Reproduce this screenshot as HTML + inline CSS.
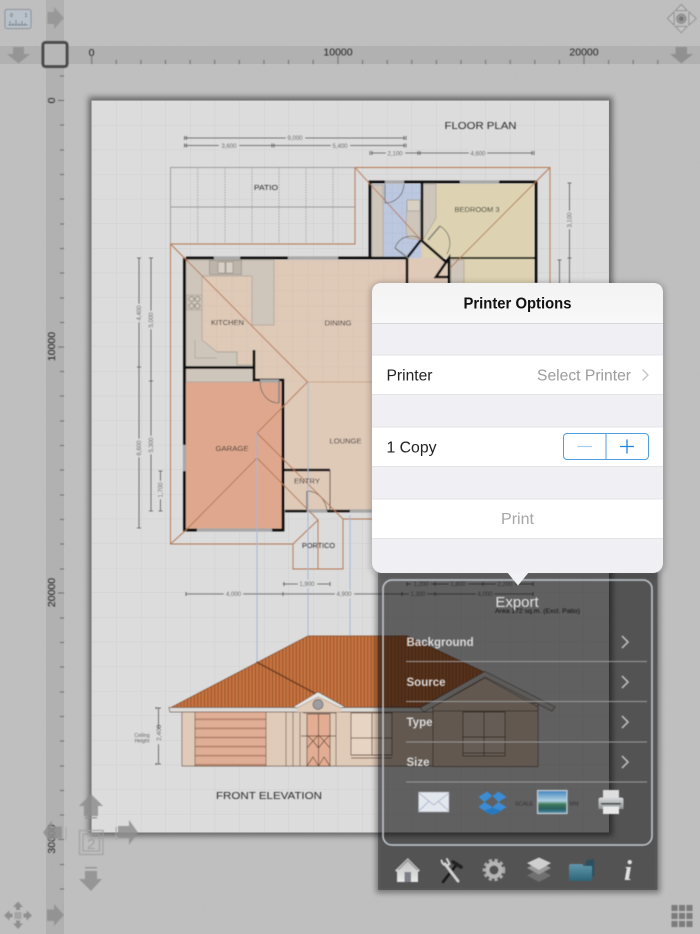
<!DOCTYPE html>
<html><head><meta charset="utf-8"><style>
html,body{margin:0;padding:0;background:#bbb;width:700px;height:934px;overflow:hidden}
svg{display:block}
text{font-family:"Liberation Sans",sans-serif}
</style></head><body>
<svg xmlns="http://www.w3.org/2000/svg" width="700" height="934" viewBox="0 0 700 934">
<defs>
<pattern id="grid" patternUnits="userSpaceOnUse" x="91.7" y="100.5" width="24.6" height="24.6"><rect width="24.6" height="24.6" fill="#dcdcdc"/><path d="M0 0H24.6M0 0V24.6" stroke="#d1d1d1" stroke-width="1" fill="none"/></pattern>
<pattern id="tile" patternUnits="userSpaceOnUse" x="186" y="260" width="15.2" height="15.2"><rect width="15.2" height="15.2" fill="#dfc9b7"/><path d="M0 0H15.2M0 0V15.2" stroke="#d3bfae" stroke-width=".8" fill="none"/></pattern>
<pattern id="btile" patternUnits="userSpaceOnUse" x="372" y="183" width="10" height="10"><rect width="10" height="10" fill="#bcc8df"/><path d="M0 0H10M0 0V10" stroke="#a9b5cc" stroke-width=".6" fill="none"/></pattern>
<pattern id="rf" patternUnits="userSpaceOnUse" width="3.4" height="8"><rect width="3.4" height="8" fill="#c8743f"/><rect width="1" height="8" fill="#95512c"/></pattern>
<pattern id="gd" patternUnits="userSpaceOnUse" x="195" y="712" width="71" height="9.1"><rect width="71" height="9.1" fill="#dfae95"/><rect y="6.5" width="71" height="1.6" fill="#b5806a"/></pattern>
<filter id="noise" x="0" y="0" width="100%" height="100%"><feTurbulence type="fractalNoise" baseFrequency=".035 .06" numOctaves="3" seed="5"/><feColorMatrix values="0 0 0 0 .5 0 0 0 0 .5 0 0 0 0 .5 .6 0 0 0 -.2"/></filter>
<filter id="b2" x="-10%" y="-10%" width="120%" height="120%"><feGaussianBlur stdDeviation="2.8"/></filter>
<filter id="s" x="-5%" y="-5%" width="110%" height="110%"><feGaussianBlur stdDeviation=".45"/></filter>
<linearGradient id="head" x1="0" y1="0" x2="0" y2="1"><stop offset="0" stop-color="#f3f3f3"/><stop offset="1" stop-color="#f8f8f9"/></linearGradient>
<linearGradient id="sky" x1="0" y1="0" x2="0" y2="1"><stop offset="0" stop-color="#3f83bd"/><stop offset=".45" stop-color="#b1d2e4"/><stop offset=".6" stop-color="#3d7a5a"/><stop offset=".8" stop-color="#2d5f60"/><stop offset="1" stop-color="#4b94b4"/></linearGradient>
<linearGradient id="home" x1="0" y1="0" x2="0" y2="1"><stop offset="0" stop-color="#bdbdbd"/><stop offset="1" stop-color="#e8e8e8"/></linearGradient>
<linearGradient id="fold" x1="0" y1="0" x2="0" y2="1"><stop offset="0" stop-color="#5f97ac"/><stop offset="1" stop-color="#2f6478"/></linearGradient>
<linearGradient id="pr" x1="0" y1="0" x2="0" y2="1"><stop offset="0" stop-color="#d8dadc"/><stop offset="1" stop-color="#8f9497"/></linearGradient>
</defs>

<!-- background -->
<rect width="700" height="934" fill="#bfbfbf"/>
<rect width="700" height="934" filter="url(#noise)" opacity=".22"/>
<rect x="0" y="46" width="700" height="18" fill="#000" opacity=".07"/>
<rect x="46" y="0" width="18" height="934" fill="#000" opacity=".07"/>
<rect x="46" y="46" width="18" height="18" fill="#bbb" opacity=".5"/>

<g filter="url(#s)">
<!-- rulers -->
<g stroke="#6f6f6f" stroke-width="1" fill="none">
<path d="M91.7 56V64M338 56V64M584 56V64M116.3 60V64M140.9 60V64M165.5 60V64M190.1 60V64M214.7 60V64M239.3 60V64M263.9 60V64M288.5 60V64M313.1 60V64M362.6 60V64M387.2 60V64M411.8 60V64M436.4 60V64M461 60V64M485.6 60V64M510.2 60V64M534.8 60V64M559.4 60V64M608.6 60V64M633.2 60V64M657.8 60V64"/>
<path d="M58 100.5H64M60 76H64M60 125H64M60 150H64M60 174.500H64M60 199H64M60 224H64M60 248.500H64M60 273H64M60 298H64M60 322.500H64M58 347H64M60 371.500H64M60 396H64M60 421H64M60 445.500H64M60 470H64M60 495H64M60 519.500H64M60 544H64M60 569H64M58 593H64M60 618H64M60 642.500H64M60 667H64M60 692H64M60 716.500H64M60 741H64M60 766H64M60 790.500H64M60 815H64M58 839.500H64M60 864.500H64M60 889H64"/>
</g>
<g font-size="10.500" fill="#222">
<text x="91.500" y="56" text-anchor="middle">0</text>
<text x="338" y="55.500" text-anchor="middle">10000</text>
<text x="584" y="55.500" text-anchor="middle">20000</text>
<text transform="translate(55,100.500) rotate(-90)" text-anchor="middle">0</text>
<text transform="translate(55,346.500) rotate(-90)" text-anchor="middle">10000</text>
<text transform="translate(55,592.500) rotate(-90)" text-anchor="middle">20000</text>
<text transform="translate(55,839) rotate(-90)" text-anchor="middle">30000</text>
</g>

<!-- top-left controls -->
<rect x="5" y="9.500" width="26" height="19" rx="2" fill="#b9c2ca" stroke="#8b8f94" stroke-width="1"/>
<path d="M8 25H28M10 25V21M13 25V23M16 25V20M19 25V23M22 25V21M25 25V23" stroke="#66707a" stroke-width=".8" fill="none"/>
<text x="11.500" y="17" font-size="5" fill="#444" text-anchor="middle">0</text><text x="26" y="17" font-size="5" fill="#444" text-anchor="middle">1</text>
<path d="M47.500 12H54V7L64 18L54 29V24H47.500Z" fill="#989898"/>
<path d="M13 47H24V54H30L18.500 63.500L7 54H13Z" fill="#959595"/>
<rect x="43" y="42.500" width="24" height="24" rx="2.500" fill="#bdbdbd" fill-opacity=".6" stroke="#4c4c4c" stroke-width="3"/>
<!-- top-right -->
<g fill="#c4c4c4" stroke="#929292" stroke-width="1">
<path d="M681.300 4.500L687 10.500H675.500Z"/><path d="M681.300 32.700L687 26.500H675.500Z"/>
<path d="M667.500 18.500L674 12V25Z"/><path d="M696.200 18.500L689 12V25Z"/>
</g>
<circle cx="681.300" cy="18.700" r="4.600" fill="#9a9a9a" stroke="#858585" stroke-width="1"/><circle cx="681.300" cy="18.700" r="2.300" fill="#747474"/>
<path d="M675.500 47H687V54H693L681.300 63.500L670 54H675.500Z" fill="#909090"/>
</g>

<!-- paper -->
<rect x="88.500" y="97" width="524" height="739" fill="#333" opacity=".62" filter="url(#b2)"/>
<rect x="91.500" y="100.500" width="517.500" height="732" fill="url(#grid)"/>

<g filter="url(#s)">
<!-- patio -->
<g stroke="#9d9d9d" fill="none"><path d="M355 167.500H170.500V244M170.500 207H355" stroke-width=".9"/>
<path d="M197.700 167.500V244M225 167.500V244M252 167.500V244M279 167.500V244M306 167.500V244M333 167.500V244" stroke-dasharray="1.500 1.200" stroke-width=".8"/></g>

<!-- floors -->
<rect x="186" y="260" width="222" height="122" fill="url(#tile)"/>
<rect x="285" y="382" width="95" height="129" fill="#dfc9b7"/>
<rect x="186" y="382" width="97" height="148" fill="#dfa88e"/>
<path d="M407 258L421 240L447 263V300H407Z" fill="#dfc9b7"/>
<rect x="372" y="184" width="49" height="74" fill="url(#btile)"/>
<rect x="423" y="184" width="111" height="74" fill="#ddd3b2"/>
<rect x="450" y="259" width="84" height="30" fill="#ddd3b2"/>
<!-- counters -->
<g fill="#cfc6bb" stroke="#a9a298" stroke-width=".7">
<path d="M186 260H274V325H252V276H202V340L217 352H237V365H254V381H186V369H186Z"/>
<rect x="186" y="367" width="68" height="15"/>
<path d="M372 185H383V257H372Z"/><path d="M407 200H420V240L407 238L406 226Z"/>
<path d="M423 184H436V218L423 240Z"/><rect x="451" y="260" width="13" height="30"/>
<rect x="187" y="295" width="15" height="15"/>
<path d="M195 340V358H217M217 352H237V365" fill="none"/>
</g>
<g fill="#bdb5aa" stroke="#8d877e" stroke-width=".6"><rect x="209.500" y="260.500" width="32" height="14"/><rect x="218" y="262" width="7" height="11" fill="#d7d0c6"/><rect x="226" y="262" width="7" height="11" fill="#d7d0c6"/></g>
<g fill="none" stroke="#7f7a72" stroke-width=".7"><circle cx="191.500" cy="299" r="2.600"/><circle cx="197.500" cy="299" r="2.600"/><circle cx="191.500" cy="306" r="2.600"/><circle cx="197.500" cy="306" r="2.600"/></g>
<rect x="407" y="200" width="13" height="11" fill="#d7d1c4" stroke="#9b958b" stroke-width=".6"/>

<!-- walls -->
<g stroke="#0c0c0c" fill="none" stroke-width="2.800">
<path d="M184.500 258V530H283V380H254V350M186 258H370V182H536V283M184.500 367.500H254M370 182V258H408"/>
<path d="M422 182V240M407 258V300M407 258L421 240L446 262M283.500 470H330M285 511H350M283 530H186M449 262V290M449 283V258L436 277H449" stroke-width="2.600"/>
<path d="M449 258H535" stroke-width="2"/>
</g>
<path d="M330 470V511" stroke="#333" stroke-width=".9"/>
<!-- windows -->
<g stroke="#a7a7a7" stroke-width="3.200" fill="none"><path d="M214 258H240M288 258H338M184.500 445V471M197 530H272M385 182H404M460 182H499M350 511H372M307 511H327M260 381H279"/></g>
<!-- doors -->
<g fill="none" stroke="#555" stroke-width=".7"><path d="M260 381C260 394 268 403 279 403"/><path d="M279 381V403" stroke-width="1.600" stroke="#888"/>
<path d="M307 491C318 491 326 500 327 511"/><path d="M307 491V511" stroke-width="1.400" stroke="#777"/>
<path d="M385 203C395 203 404 195 404 184"/><path d="M385 184V203" stroke-width="1" stroke="#777"/>
<path d="M395 248C400 234 416 234 421 240" stroke="#555"/><path d="M395 248L408 258" stroke-width="1.400" stroke="#777"/>
<path d="M440 226C451 233 452 245 447 254" stroke="#555"/><path d="M440 226L428 240" stroke-width="1.400" stroke="#777"/></g>

<!-- roof outline -->
<g fill="none" stroke="#b4744e" stroke-width=".9">
<path d="M355 167.500H550V285M355 167.500V244H170.500V544H293V569H343V519H372"/>
<path d="M170.500 244L307.500 382L257 433V458L186 530L170.500 544M257 433L343 519M257 458L318 520L293 544M318 520V569M355 167.500L421 240M550 167.500L450 268"/>
<path d="M307.500 382H372" stroke="#b4744e" stroke-width=".4"/>
</g>
<!-- blue -->
<g stroke="#a4b7d8" stroke-width=".9" fill="none"><path d="M257 433V662M308 382V637M350 515V637"/></g>

<!-- hand labels -->
<g fill="#2c2c2c" font-size="7">
<text x="254" y="190" textLength="24" lengthAdjust="spacingAndGlyphs">PATIO</text>
<text x="454.500" y="212" textLength="45" lengthAdjust="spacingAndGlyphs">BEDROOM 3</text>
<text x="211" y="325" textLength="33" lengthAdjust="spacingAndGlyphs">KITCHEN</text>
<text x="324.500" y="325.500" textLength="27" lengthAdjust="spacingAndGlyphs">DINING</text>
<text x="215.500" y="451" textLength="33" lengthAdjust="spacingAndGlyphs">GARAGE</text>
<text x="329.500" y="443.500" textLength="32" lengthAdjust="spacingAndGlyphs">LOUNGE</text>
<text x="294" y="483.500" textLength="26" lengthAdjust="spacingAndGlyphs">ENTRY</text>
<text x="302" y="548" textLength="33" lengthAdjust="spacingAndGlyphs">PORTICO</text>
<text x="444.500" y="129" font-size="10" textLength="72" lengthAdjust="spacingAndGlyphs">FLOOR PLAN</text>
<text x="216" y="799" font-size="10" textLength="106" lengthAdjust="spacingAndGlyphs">FRONT ELEVATION</text>
</g>

<!-- dimensions -->
<g stroke="#555" stroke-width=".8" fill="none">
<path d="M185 138H405M185 145.500H405M371 153H533"/>
<path d="M184.500 136V140M186.500 136V140M184.500 143.500V147.500M186.500 143.500V147.500M272 143.500V147.500M274 143.500V147.500M404 136V140M406 136V140M404 143.500V147.500M406 143.500V147.500M370 151V155M372 151V155M418 151V155M420 151V155M532 151V155M534 151V155"/>
<path d="M139 258V528M151 258V511M160.500 471V511M569.500 183V290M559.500 260V290"/>
<path d="M137 258H141M137 367H141M137 528H141M149 258H153M149 381H153M149 511H153M158.500 471H162.500M158.500 511H162.500M567.500 183H571.500M567.500 258H571.500M557.500 260H561.500"/>
<path d="M186 594H404M283 584H330M407 584H533M402 594H533"/>
<path d="M186 592V596M283 592V596M284 582V586M330 582V586M407 582V586M435 582V586M483 582V586M533 582V586M402 592V596M435 592V596M533 592V596"/>
</g>
<g fill="#dcdcdc"><rect x="286" y="134" width="19" height="8"/><rect x="219" y="142" width="20" height="8"/><rect x="331" y="142" width="19" height="8"/><rect x="386" y="149" width="19" height="8"/><rect x="469" y="149" width="18" height="8"/>
<rect x="135" y="304" width="8" height="18"/><rect x="135" y="439" width="8" height="18"/><rect x="147" y="311" width="8" height="18"/><rect x="147" y="436" width="8" height="18"/><rect x="156.500" y="481" width="8" height="18"/><rect x="565.500" y="211" width="8" height="18"/>
<rect x="224" y="590" width="19" height="8"/><rect x="335" y="590" width="19" height="8"/><rect x="298" y="580" width="19" height="8"/><rect x="411" y="580" width="20" height="8"/><rect x="449" y="580" width="19" height="8"/><rect x="496" y="580" width="19" height="8"/><rect x="409" y="590" width="18" height="8"/><rect x="476" y="590" width="18" height="8"/></g>
<g font-size="6" fill="#555" text-anchor="middle">
<text x="295" y="140">9,000</text><text x="229" y="148">3,600</text><text x="340" y="148">5,400</text><text x="395" y="155.500">2,100</text><text x="478" y="155.500">4,600</text>
<text transform="translate(141,313) rotate(-90)">4,400</text><text transform="translate(141,448) rotate(-90)">6,600</text>
<text transform="translate(153,320) rotate(-90)">5,000</text><text transform="translate(153,445) rotate(-90)">5,300</text>
<text transform="translate(162.500,490) rotate(-90)">1,700</text><text transform="translate(571.500,220) rotate(-90)">3,100</text>
<text x="233.500" y="596">4,000</text><text x="344" y="596">4,900</text><text x="307" y="586">1,900</text>
<text x="421" y="586">1,200</text><text x="458" y="586">1,800</text><text x="505" y="586">2,200</text><text x="418" y="596">1,300</text><text x="485" y="596">4,000</text>
</g>
<text x="495" y="613" font-size="6.500" fill="#222" textLength="85" lengthAdjust="spacingAndGlyphs">Area 172 sq.m.  (Excl. Patio)</text>

<!-- elevation -->
<g stroke="#6b5a4e" stroke-width=".7">
<path d="M182 712H433V766H182Z" fill="#e0cbb9"/>
<path d="M433 703H538V766.500H433Z" fill="#e0cbb9"/>
<path d="M170 708L308 636H407L485 672.500L420 707Z" fill="url(#rf)" stroke="#7d4a2e"/>
<path d="M256.500 662L318 695" fill="none" stroke="#6a3b20" stroke-width="1.500"/>
<path d="M169 707.500H433V712H170Z" fill="#dedcd8"/>
<path d="M420 708L485 671.500L555 707L552 711L485 677L424 712Z" fill="#d4d1cc"/>
<path d="M433 707L485 678L538 707V711H433Z" fill="#e0cbb9"/>
<rect x="195" y="712" width="71" height="54" fill="url(#gd)"/>
<path d="M293 707L318 692L345 707L341 708L318 697L297 708Z" fill="#e6e5e2"/>
<path d="M297 708L318 697L341 708V712H297Z" fill="#e0cbb9" stroke="none"/>
<circle cx="318" cy="704.500" r="5" fill="#9b9da1"/>
<path d="M300 712V766M336 712V766M286 712V766M293 712V766M303 713H336" fill="none"/>
<rect x="307" y="714" width="23" height="52" fill="#e2ad93" stroke="#5c4033"/>
<path d="M318.500 714V766M307 735L313 741L307 748M330 735L324 741L330 748M318.500 735L313 741L318.500 748L324 741ZM307 766L313 757L318.500 766L324 757L330 766M301 736H336" fill="none" stroke="#5c4033"/>
<rect x="351" y="713" width="41" height="42" fill="#e8d4c3" stroke="#5c4033"/>
<path d="M372 713V755M351 738H392M351 755H392M351 758H392" fill="none" stroke="#5c4033"/>
<rect x="463" y="712" width="42" height="44" fill="#e8d4c3" stroke="#5c4033"/>
<path d="M484 712V756M463 737H505M463 753H505" fill="none" stroke="#5c4033"/>
</g>
<g stroke="#555" stroke-width=".8" fill="none"><path d="M158.500 708V764M156 708H161M156 764H161M156 707V709M156 763V765"/></g>
<rect x="155" y="729" width="7" height="15" fill="#dcdcdc"/>
<text transform="translate(161,741) rotate(-90)" font-size="6.500" fill="#555">2,400</text>
<text x="142" y="737" font-size="5" fill="#666" text-anchor="middle">Ceiling</text><text x="142" y="742.500" font-size="5" fill="#666" text-anchor="middle">Height</text>
</g>

<!-- overlay nav -->
<g filter="url(#s)">
<g fill="#8f8f8f" opacity=".85">
<path d="M84 816V806H79L91 794L103 806H98V816Z"/><path d="M85 817H97V818.500H85ZM85 867H97V868.500H85Z"/>
<path d="M85 871H97V879H102L91 891L79 879H85Z"/>
<path d="M62 826V838H52V844L43 832L52 820V826Z" transform="translate(0,.5)"/>
<path d="M118 826H129V820L138 832.500L129 845V838H118Z"/>
<path d="M47 909.500H54V904L64 915L54 926V921H47Z"/>
</g>
<g fill="none" stroke="#a0a0a0" stroke-width="1.200" opacity=".9"><rect x="79.500" y="830.500" width="23.500" height="24"/><rect x="83" y="834" width="16.500" height="17"/></g>
<text x="91.300" y="849" font-size="15" fill="#a0a0a0" text-anchor="middle">2</text>
<path d="M66 827V840M116 827V840" stroke="#a8a8a8"/>
<!-- move -->
<g fill="#8f8f8f"><path d="M18 901.500L23 907H20V910H16V907H13ZM18 929L13 923.500H16V920.500H20V923.500H23ZM4 915.500L9.500 910.500V913.500H12.500V917.500H9.500V920.500ZM32 915.500L26.500 920.500V917.500H23.500V913.500H26.500V910.500Z"/></g>
<rect x="15" y="912.500" width="6" height="6" fill="#a5a5a5" stroke="#999" stroke-width=".6"/>
<!-- grid btn -->
<g fill="#7c7c7c"><rect x="671.500" y="905" width="6" height="6"/><rect x="679" y="905" width="6" height="6"/><rect x="686.500" y="905" width="6" height="6"/><rect x="671.500" y="913" width="6" height="6"/><rect x="679" y="913" width="6" height="6"/><rect x="686.500" y="913" width="6" height="6"/><rect x="671.500" y="921" width="6" height="6"/><rect x="679" y="921" width="6" height="6"/><rect x="686.500" y="921" width="6" height="6"/></g>
</g>

<!-- dark panel -->
<rect x="376" y="572" width="284" height="321" fill="#000" opacity=".38" filter="url(#b2)"/>
<rect x="378" y="572" width="279.500" height="318" fill="#000" opacity=".3"/>
<g filter="url(#s)">
<rect x="383" y="580" width="269" height="265" rx="9" fill="none" stroke="#c6ced6" stroke-width="1.500"/>
<text x="517" y="607" font-size="15" fill="#e4e4e4" text-anchor="middle">Export</text>
<g font-size="11.500" font-weight="bold" fill="#dadada">
<text x="406.500" y="646">Background</text><text x="406.500" y="686">Source</text><text x="406.500" y="726">Type</text><text x="406.500" y="766">Size</text>
</g>
<g stroke="#9a9a9a" stroke-width="1"><path d="M406 661.500H647M406 701.500H647M406 742H647M406 782H647"/></g>
<g fill="none" stroke="#c4c4c4" stroke-width="1.500"><path d="M622 636L628 642L622 648M622 676L628 682L622 688M622 716L628 722L622 728M622 756L628 762L622 768"/></g>

<!-- bottom icons -->
<rect x="418.500" y="792" width="30.500" height="20" fill="#e3e7ee" stroke="#9aa0a8" stroke-width=".6"/>
<path d="M419 793L433.700 805L449 793M419 811L429 801M449 811L438 801" fill="none" stroke="#aeb9cc" stroke-width=".9"/>
<g fill="#3a8cd4"><path d="M478.500 797L487 791.500L492.500 796L484.500 802ZM492.500 796L498.500 791.500L506.500 797L498.500 802ZM478.500 807L484.500 802L492.500 807L487 812.500ZM498.500 802L506.500 807L498 812.500L492.500 807Z"/><path d="M485 810L492.500 808L500 810V812L492.500 815L485 812Z" fill="#2679c0"/></g>
<text x="524" y="805.500" font-size="5.500" fill="#333" text-anchor="middle">SCALE</text>
<text x="574" y="805.500" font-size="5.500" fill="#333" text-anchor="middle">MM</text>
<rect x="537.500" y="790.500" width="29.500" height="23" fill="url(#sky)" stroke="#c2ced6" stroke-width="1.200"/>
<rect x="603" y="790" width="16" height="8" fill="#dedede"/>
<path d="M598.500 799.500Q598.500 797.500 601 797.500H621Q623.500 797.500 623.500 799.500V809H598.500Z" fill="url(#pr)"/>
<rect x="601" y="803" width="20" height="1.500" fill="#333"/><rect x="603" y="806.500" width="16" height="7.500" fill="#e8e8e8"/>

<!-- toolbar -->
<path d="M395 870.500L407.800 858L420 870.500L418 872V882H397V872Z" fill="url(#home)"/>
<path d="M398 870L407.800 860.500L417.500 870" fill="none" stroke="#8a8a8a" stroke-width="1.200"/>
<rect x="404.500" y="872" width="6.500" height="10" fill="#7e7f87"/>
<g stroke-linecap="round" fill="none">
<path d="M443 882L457 864" stroke="#161616" stroke-width="2.400"/>
<path d="M453 862L461 867" stroke="#222" stroke-width="3.600"/>
<path d="M445 864L458 881" stroke="#d2d2d2" stroke-width="3"/>
<path d="M441.500 860.500C442.500 865.500 447 866.500 449.500 864L447 859" stroke="#d2d2d2" stroke-width="2"/>
</g>
<circle cx="494" cy="870" r="9.800" fill="none" stroke="#aaa" stroke-width="3" stroke-dasharray="3.300 2.500"/>
<circle cx="494" cy="870" r="6.500" fill="none" stroke="#b5b5b5" stroke-width="4.200"/>
<path d="M539 877L551 870.500L539 864L527 870.500Z" fill="#6f6f6f" transform="translate(0,5)"/>
<path d="M539 872L551 865.500L539 859L527 865.500Z" fill="#989898" transform="translate(0,2.500)"/>
<path d="M539 870.500L551 863.500L539 858L527 863.500Z" fill="#cfcfcf" transform="translate(0,-.5)"/>
<path d="M586 860.500L594 859V876L586 880Z" fill="#2b4f60"/>
<path d="M569 866Q569 864 571 864H582L584 866H592V878Q592 881 590 881H571Q569 881 569 879Z" fill="url(#fold)"/>
<text x="628" y="880" font-size="29" font-style="italic" font-weight="bold" fill="#e0e0e0" text-anchor="middle" style="font-family:'Liberation Serif',serif">i</text>
</g>

<!-- popup shadow -->
<rect x="370" y="282" width="295" height="294" rx="11" fill="#000" opacity=".2" filter="url(#b2)"/>
<!-- popup -->
<path d="M507 572L518 585.500L529 572Z" fill="#f2f2f6"/>
<rect x="372" y="283" width="291" height="290" rx="10" fill="#efeff4"/>
<path d="M372 323V293Q372 283 382 283H653Q663 283 663 293V323Z" fill="url(#head)"/>
<rect x="372" y="323" width="291" height="1" fill="#d6d6dc"/>
<g fill="#fff"><rect x="372" y="355.500" width="291" height="38.500"/><rect x="372" y="427.500" width="291" height="38.500"/><rect x="372" y="499.500" width="291" height="38.500"/></g>
<g fill="#e3e3e8"><rect x="372" y="354.500" width="291" height="1"/><rect x="372" y="394" width="291" height="1"/><rect x="372" y="426.500" width="291" height="1"/><rect x="372" y="466" width="291" height="1"/><rect x="372" y="498.500" width="291" height="1"/><rect x="372" y="538" width="291" height="1"/></g>
<text x="517.500" y="308.500" font-size="15.500" font-weight="bold" fill="#111" text-anchor="middle" textLength="108" lengthAdjust="spacingAndGlyphs">Printer Options</text>
<text x="386.500" y="380.500" font-size="15.500" fill="#222" textLength="46" lengthAdjust="spacingAndGlyphs">Printer</text>
<text x="537" y="380.500" font-size="15.500" fill="#9c9c9f" textLength="94" lengthAdjust="spacingAndGlyphs">Select Printer</text>
<path d="M642.500 369.500L648 375L642.500 380.500" fill="none" stroke="#c3c3c8" stroke-width="1.300"/>
<text x="386.500" y="452.500" font-size="15.500" fill="#222" textLength="50" lengthAdjust="spacingAndGlyphs">1 Copy</text>
<rect x="563.500" y="433.500" width="85" height="26" rx="3.500" fill="#fff" stroke="#4f9fe0" stroke-width="1"/>
<path d="M606 433.500V459.500" stroke="#4f9fe0" stroke-width="1"/>
<path d="M577.500 446.500H592" stroke="#a5cdee" stroke-width="1.200"/>
<path d="M620 446.500H634M627 439.500V453.500" stroke="#1b84dc" stroke-width="1.300"/>
<text x="517.500" y="524" font-size="15.500" fill="#a6a6a8" text-anchor="middle" textLength="33" lengthAdjust="spacingAndGlyphs">Print</text>
</svg>
</body></html>
